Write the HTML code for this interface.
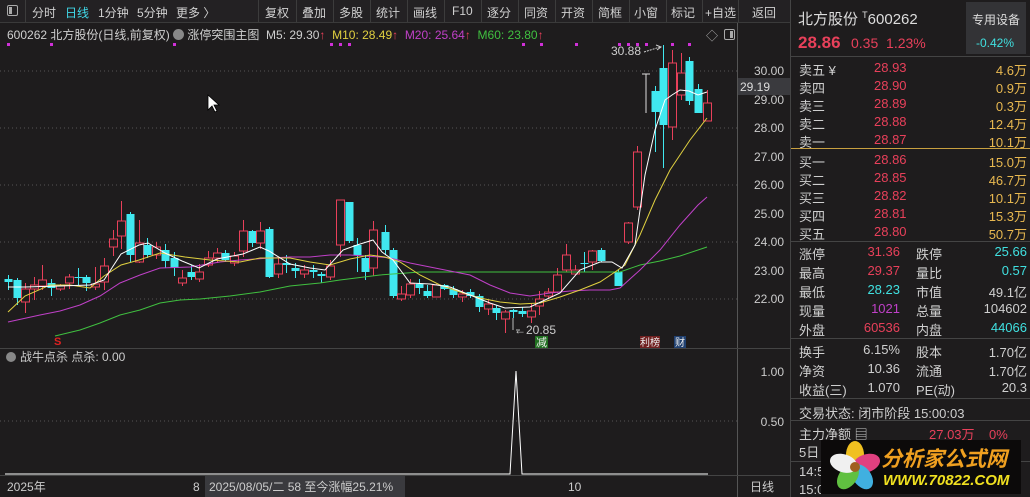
<!DOCTYPE html>
<html><head><meta charset="utf-8">
<style>
*{margin:0;padding:0;box-sizing:border-box}
body{width:1030px;height:497px;overflow:hidden;background:#1e1c1d;font-family:"Liberation Sans","Noto Sans CJK SC",sans-serif;color:#ccc;position:relative}
.a{position:absolute;white-space:nowrap}
.tb{position:absolute;left:0;top:0;width:790px;height:23px;background:#232123;border-bottom:1px solid #3a3a3a;font-size:12px}
.tb span{position:absolute;top:4px;color:#d0d0d0}
.sep{position:absolute;top:0;width:1px;height:22px;background:#3c3c3c}
.rp{position:absolute;left:790px;top:0;width:240px;height:497px;background:#1e1c1d;border-left:1px solid #444;font-size:13px}
.row{position:absolute;left:8px;width:228px;height:18px}
.row span{position:absolute;top:0}
.r{color:#e8405a}.c{color:#40e0e0}.y{color:#e8b850}.w{color:#cfcfcf}.p{color:#c040c8}
.hl{position:absolute;left:0;width:240px;height:1px;background:#444}
</style></head><body>
<div class="tb">
<div class="a" style="left:7px;top:5px;width:11px;height:11px;border:1px solid #aaa;border-radius:2px"><div style="position:absolute;left:1px;top:1px;width:3px;height:7px;background:#aaa"></div></div>
<div class="sep" style="left:25px"></div>
<span style="left:32px">分时</span><span style="left:65px;color:#40d8e8">日线</span><span style="left:98px">1分钟</span><span style="left:137px">5分钟</span><span style="left:176px">更多 〉</span>
<div class="sep" style="left:258px"></div>
<span style="left:265px">复权</span><div class="sep" style="left:296px"></div>
<span style="left:302px">叠加</span><div class="sep" style="left:333px"></div>
<span style="left:339px">多股</span><div class="sep" style="left:370px"></div>
<span style="left:376px">统计</span><div class="sep" style="left:407px"></div>
<span style="left:413px">画线</span><div class="sep" style="left:444px"></div>
<span style="left:452px">F10</span><div class="sep" style="left:481px"></div>
<span style="left:487px">逐分</span><div class="sep" style="left:518px"></div>
<span style="left:524px">同资</span><div class="sep" style="left:555px"></div>
<span style="left:561px">开资</span><div class="sep" style="left:592px"></div>
<span style="left:598px">简框</span><div class="sep" style="left:629px"></div>
<span style="left:634px">小窗</span><div class="sep" style="left:666px"></div>
<span style="left:671px">标记</span><div class="sep" style="left:702px"></div>
<span style="left:705px">+自选</span><div class="sep" style="left:738px"></div>
<span style="left:752px">返回</span>
</div>
<div class="a" style="left:7px;top:26px;font-size:12px;color:#cfcfcf">600262 北方股份(日线,前复权) <span style="display:inline-block;width:11px;height:11px;border-radius:6px;background:#888;vertical-align:-1px"></span> 涨停突围主图 &nbsp;M5: 29.30<span class="r">↑</span> &nbsp;<span style="color:#e0d040">M10: 28.49</span><span class="r">↑</span> &nbsp;<span class="p">M20: 25.64</span><span class="r">↑</span> &nbsp;<span style="color:#40c040">M60: 23.80</span><span class="r">↑</span></div>
<div class="a" style="left:706px;top:27px;font-size:12px;color:#aaa">◇</div>
<div class="a" style="left:724px;top:29px;width:11px;height:11px;border:1px solid #aaa;border-radius:2px"><div style="position:absolute;right:1px;top:1px;width:3px;height:7px;background:#aaa"></div></div>

<svg class="a" style="left:0;top:0" width="790" height="497" id="ch">
<g stroke="#555" stroke-dasharray="1,3" stroke-width="1">
<line x1="0" y1="71" x2="737" y2="71"/><line x1="0" y1="128" x2="737" y2="128"/><line x1="0" y1="185" x2="737" y2="185"/><line x1="0" y1="242" x2="737" y2="242"/><line x1="0" y1="299" x2="737" y2="299"/><line x1="0" y1="421" x2="737" y2="421"/>
</g>
<line x1="737.5" y1="23" x2="737.5" y2="497" stroke="#555"/>
<line x1="0" y1="348.5" x2="790" y2="348.5" stroke="#444"/>
<line x1="0" y1="475.5" x2="790" y2="475.5" stroke="#444"/>
<g id="cd"></g>
<g fill="none" stroke-width="1">
<polyline stroke="#40c040" points="55,336 80,330 100,323 120,315 140,310 160,303 180,300 200,299 230,296 260,292 290,286 320,283 340,280 380,275 420,272 470,272 520,272 560,272 600,272 620,272 640,265 660,261 680,256 707,247"/>
<polyline stroke="#c040c8" points="8,322 40,315 60,311 80,305 100,296 120,283 140,275 160,268 190,267 220,262 240,260 270,258 290,257 310,257 330,255 350,255 380,257 390,258 410,263 430,267 450,271 470,275 490,285 510,293 530,296 550,293 570,291 590,290 610,290 620,288 640,270 660,250 680,225 698,205 707,197"/>
<polyline stroke="#e0d040" points="8,312 25,296 50,285 70,285 90,288 104,276 121,265 139,260 160,253 185,257 210,260 240,262 260,258 290,258 310,262 330,265 350,259 370,255 385,257 400,262 420,275 440,285 460,292 480,298 500,302 520,304 540,303 560,297 580,290 600,282 615,272 625,265 640,235 655,200 670,170 690,140 707,118"/>
<polyline stroke="#fff" points="8,287 25,287 60,286 90,285 104,280 121,254 139,245 148,243 165,253 182,261 199,268 217,259 243,254 260,247 269,251 290,264 310,268 325,270 343,250 357,245 373,240 382,252 393,260 410,283 430,284 450,287 470,295 490,303 505,308 530,307 545,300 560,293 580,270 600,262 612,262 622,268 635,245 645,175 655,130 665,100 672,95 680,90 689,91 698,95 707,92"/>
</g>
<line x1="646" y1="74" x2="646" y2="113" stroke="#ddd"/><line x1="642" y1="74" x2="650" y2="74" stroke="#ddd"/>
<g fill="#d030d8" id="dots"></g>
<text x="611" y="55" fill="#ccc" font-size="12">30.88</text>
<path d="M644 52 L660 47" stroke="#ccc" fill="none" stroke-dasharray="2,1"/><path d="M656 45 L661 47 L657 50" stroke="#ccc" fill="none"/>
<path d="M513 318 V330 M516 330 H520" stroke="#bbb" fill="none"/>
<text x="514" y="334" fill="#ccc" font-size="12">←20.85</text>
<text x="54" y="345" fill="#e02020" font-size="11" font-weight="bold">S</text>
<rect x="535" y="336" width="13" height="12" fill="#207020"/><text x="536" y="346" fill="#eee" font-size="11">减</text>
<rect x="640" y="336" width="20" height="12" fill="#702020"/><text x="640" y="346" fill="#eee" font-size="10">利榜</text>
<rect x="674" y="336" width="12" height="12" fill="#204070"/><text x="675" y="346" fill="#eee" font-size="10">财</text>
<g font-size="12" fill="#ccc" text-anchor="end">
<text x="784" y="75">30.00</text><text x="784" y="104">29.00</text><text x="784" y="132">28.00</text><text x="784" y="161">27.00</text><text x="784" y="189">26.00</text><text x="784" y="218">25.00</text><text x="784" y="246">24.00</text><text x="784" y="275">23.00</text><text x="784" y="303">22.00</text>
<text x="784" y="376">1.00</text><text x="784" y="426">0.50</text>
</g>
<rect x="738" y="78" width="52" height="17" fill="#3a3a3e"/><text x="740" y="91" fill="#ddd" font-size="12">29.19</text>
<circle cx="11" cy="357" r="5" fill="#888"/>
<text x="20" y="361" fill="#ccc" font-size="12">战牛点杀 点杀: 0.00</text>
<polyline points="5,474 505,474 510,474 516,371 522,474 708,474" stroke="#fff" fill="none"/>
<rect x="205" y="476" width="200" height="21" fill="#3a3a3e"/>
<g font-size="12" fill="#ccc"><text x="7" y="491">2025年</text><text x="193" y="491">8</text><text x="209" y="491">2025/08/05/二 58 至今涨幅25.21%</text><text x="568" y="491">10</text><text x="750" y="491">日线</text></g>
</svg>

<div class="rp">
<div class="a" style="left:7px;top:8px;font-size:15px;color:#ddd">北方股份 <sup style="font-size:9px">T</sup>600262</div>
<div class="a" style="left:175px;top:2px;width:60px;height:52px;background:#333336"><div style="position:absolute;left:6px;top:9px;font-size:12px;color:#ddd">专用设备</div><div style="position:absolute;left:10px;top:34px;font-size:12px" class="c">-0.42%</div></div>
<div class="a r" style="left:7px;top:33px;font-size:17px;font-weight:bold">28.86</div>
<div class="a r" style="left:60px;top:35px;font-size:14px">0.35 &nbsp;1.23%</div>
<div class="hl" style="top:56px"></div>
<div id="rows"></div>
<div class="a" style="left:0;top:148px;width:240px;height:1px;background:#c8a040"></div>
<div class="hl" style="top:241px"></div><div class="hl" style="top:338px"></div><div class="hl" style="top:398px"></div><div class="hl" style="top:420px"></div><div class="hl" style="top:461px"></div>
<div class="a w" style="left:8px;top:403px">交易状态: 闭市阶段 15:00:03</div>
<div class="a w" style="left:8px;top:424px">主力净额 ▤</div><div class="a r" style="left:138px;top:424px">27.03万 &nbsp;&nbsp;&nbsp;0%</div>
<div class="a w" style="left:8px;top:442px">5日</div>
<div class="a w" style="left:8px;top:464px">14:5</div><div class="a w" style="left:8px;top:482px">15:0</div>
<div class="a" style="left:30px;top:440px;width:200px;height:54px;background:#0c0a0a">
<svg width="60" height="54" style="position:absolute;left:4px;top:0"><g transform="translate(30,27)"><ellipse rx="9" ry="14" cy="-12" fill="#f0c020"/><ellipse rx="9" ry="14" cy="-12" fill="#e04080" transform="rotate(72)"/><ellipse rx="9" ry="14" cy="-12" fill="#40b0e0" transform="rotate(144)"/><ellipse rx="9" ry="14" cy="-12" fill="#60c040" transform="rotate(216)"/><ellipse rx="9" ry="14" cy="-12" fill="#f0f0f0" transform="rotate(288)"/><circle r="5" fill="#a06020"/></g></svg>
<div style="position:absolute;left:60px;top:3px;font-size:21px;font-weight:bold;font-style:italic;color:#f0a020">分析家公式网</div>
<div style="position:absolute;left:62px;top:32px;font-size:15px;font-weight:bold;font-style:italic;color:#f0e020">WWW.70822.COM</div>
</div>
</div>
<div class="a" style="left:208px;top:95px;width:0;height:0;border-left:6px solid #fff;border-top:0;"></div>
<svg class="a" style="left:207px;top:94px" width="14" height="20"><path d="M1 1 V16 L5 12 L8 18 L10 17 L7 11 L12 11 Z" fill="#fff" stroke="#000" stroke-width="0.8"/></svg>
<script>
var C=[[8,279,282,275,290,'c'],[17,280,298,278,305,'c'],[25,289,302,283,313,'r'],[34,285,289,277,300,'r'],[42,280,286,265,290,'r'],[51,283,288,279,296,'c'],[60,286,289,284,291,'r'],[69,277,283,274,289,'r'],[78,277,278,268,285,'c'],[86,277,283,275,291,'c'],[95,284,287,267,290,'r'],[104,266,282,258,290,'r'],[113,239,247,230,256,'r'],[121,221,236,201,249,'r'],[130,214,255,212,262,'c'],[139,243,262,220,263,'r'],[147,245,255,238,258,'c'],[156,247,255,242,259,'r'],[165,250,261,244,268,'c'],[174,258,268,252,276,'c'],[182,278,283,270,286,'r'],[191,272,277,265,280,'c'],[199,272,279,264,282,'r'],[208,258,265,251,267,'r'],[217,253,258,248,263,'r'],[225,253,260,250,262,'c'],[234,256,263,252,266,'r'],[243,231,251,220,257,'r'],[252,231,243,230,247,'c'],[260,231,243,222,249,'r'],[269,229,277,227,278,'c'],[278,264,274,258,278,'r'],[286,263,265,255,273,'c'],[295,268,271,263,278,'c'],[304,270,274,265,278,'r'],[313,270,272,265,278,'c'],[321,274,276,272,283,'c'],[330,266,277,260,280,'r'],[340,200,245,200,257,'r'],[349,202,241,202,243,'c'],[357,245,255,238,272,'c'],[365,258,272,255,280,'c'],[373,230,268,221,276,'r'],[385,232,250,225,255,'c'],[393,250,296,248,298,'c'],[401,294,299,286,301,'r'],[410,284,295,279,298,'r'],[419,284,288,279,294,'c'],[427,291,296,285,298,'c'],[436,285,297,284,297,'r'],[444,285,289,284,290,'c'],[453,289,295,286,298,'c'],[462,294,297,290,302,'r'],[470,292,296,289,298,'c'],[479,296,307,294,312,'c'],[488,304,309,300,315,'r'],[496,308,313,305,320,'c'],[505,312,319,310,333,'r'],[513,310,312,309,318,'c'],[522,311,314,307,317,'c'],[531,311,317,303,323,'r'],[539,299,306,291,315,'r'],[548,292,296,288,298,'r'],[557,275,292,268,293,'r'],[566,255,270,244,272,'r'],[575,270,274,265,275,'r'],[584,263,264,252,272,'c'],[592,251,262,250,270,'r'],[601,250,261,248,262,'c'],[618,272,286,270,286,'c'],[628,223,242,222,244,'r'],[637,152,207,146,210,'r'],[655,91,112,86,152,'c'],[663,68,125,45,168,'c'],[672,63,127,50,140,'r'],[681,73,95,53,100,'r'],[689,61,101,57,105,'c'],[698,89,113,84,113,'c'],[707,103,121,90,121,'r']];
var s='';C.forEach(function(d){var col=d[5]=='r'?'#e8405a':'#40e8f0';var x=d[0];
s+='<line x1="'+(x+.5)+'" y1="'+d[3]+'" x2="'+(x+.5)+'" y2="'+d[4]+'" stroke="'+col+'"/>';
if(d[5]=='r'){s+='<rect x="'+(x-3.5)+'" y="'+d[1]+'" width="8" height="'+Math.max(1,d[2]-d[1])+'" fill="#1e1c1d" stroke="'+col+'"/>';}
else s+='<rect x="'+(x-3.5)+'" y="'+d[1]+'" width="8" height="'+Math.max(1,d[2]-d[1])+'" fill="'+col+'"/>';});
document.getElementById('cd').innerHTML=s;
var D=[7,50,173,330,339,348,522,540,575,618,627,636,645,671,688],t='';D.forEach(function(x){t+='<rect x="'+x+'" y="43" width="3" height="3"/>'});
document.getElementById('dots').innerHTML=t;
var R=[['卖五 ¥','28.93','4.6万'],['卖四','28.90','0.9万'],['卖三','28.89','0.3万'],['卖二','28.88','12.4万'],['卖一','28.87','10.1万'],['买一','28.86','15.0万'],['买二','28.85','46.7万'],['买三','28.82','10.1万'],['买四','28.81','15.3万'],['买五','28.80','50.7万']];
var h='',ys=[60,78,96,114,132,152,170,188,206,224];
R.forEach(function(r,i){h+='<div class="row" style="top:'+ys[i]+'px"><span class="w">'+r[0]+'</span><span class="r" style="left:75px">'+r[1]+'</span><span class="y" style="right:0">'+r[2]+'</span></div>'});
var Q=[['涨停','31.36','r','跌停','25.66','c'],['最高','29.37','r','量比','0.57','c'],['最低','28.23','c','市值','49.1亿','w'],['现量','1021','p','总量','104602','w'],['外盘','60536','r','内盘','44066','c'],['换手','6.15%','w','股本','1.70亿','w'],['净资','10.36','w','流通','1.70亿','w'],['收益(三)','1.070','w','PE(动)','20.3','w']];
var qy=[244,263,282,301,320,342,361,380];
Q.forEach(function(q,i){h+='<div class="row" style="top:'+qy[i]+'px"><span class="w">'+q[0]+'</span><span class="'+q[2]+'" style="right:127px">'+q[1]+'</span><span class="w" style="left:117px">'+q[3]+'</span><span class="'+q[5]+'" style="right:0">'+q[4]+'</span></div>'});
document.getElementById('rows').innerHTML=h;
</script>
</body></html>
